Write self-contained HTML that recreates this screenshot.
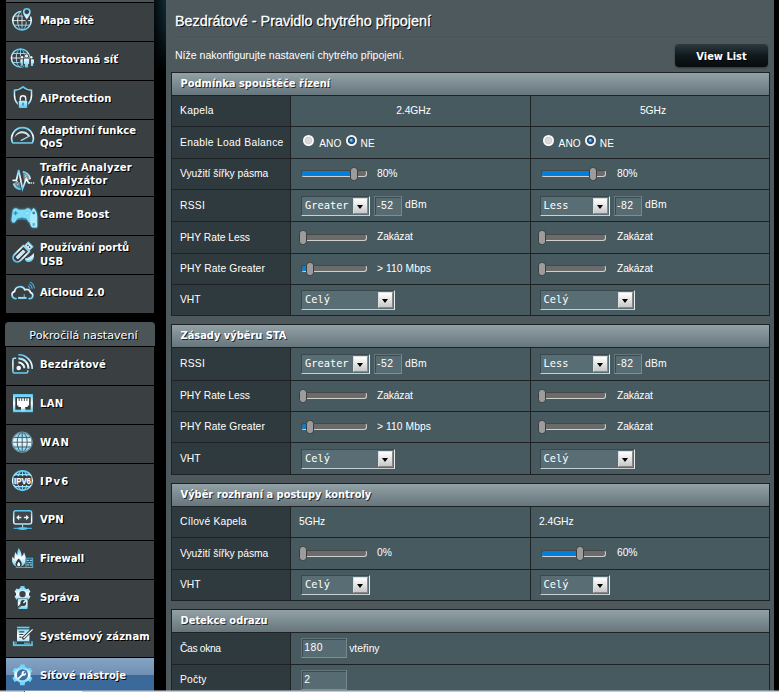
<!DOCTYPE html>
<html lang="cs"><head><meta charset="utf-8"><title>Bezdrátové - Pravidlo chytrého připojení</title>
<style>
html,body{margin:0;padding:0;}
body{width:779px;height:692px;overflow:hidden;background:#000;position:relative;font-family:"Liberation Sans",sans-serif;font-size:10.6px;color:#fff;}
*{box-sizing:border-box;}
.abs{position:absolute;}
#side{position:absolute;left:0;top:0;width:166px;height:692px;background:#000;}
#glow{position:absolute;left:154px;top:0;width:12px;height:80px;background:linear-gradient(to right,rgba(0,0,0,.75),rgba(0,0,0,0)),linear-gradient(to bottom,#0f2c35 0%,#0b2028 35%,#000 90%);}
.mi{position:absolute;left:6px;width:148px;background:#3a4042;}
.mi .t{position:absolute;left:34px;font-family:"DejaVu Sans",sans-serif;font-weight:bold;font-size:10.05px;line-height:13px;color:#fff;text-shadow:1px 1px 0 #000;white-space:nowrap;}
.mi svg{position:absolute;left:4px;}
.mi.sel{background:linear-gradient(to bottom,#86a4c3 0%,#6f90b4 44%,#3b6a9a 45.5%,#3b6a9a 100%);}
#adv{position:absolute;left:5px;top:322px;width:150px;height:24px;background:#4b5558;border-radius:4px 4px 0 0;font-family:"DejaVu Sans",sans-serif;font-size:11.1px;text-align:center;line-height:27px;padding-left:7px;letter-spacing:.05px;color:#fff;text-shadow:1px 1px 0 #000;}
#panel{position:absolute;left:166px;top:0;width:608px;height:692px;background:#4d595d;}
#title{position:absolute;left:175px;top:11.7px;font-size:14.4px;line-height:18px;white-space:nowrap;text-shadow:1px 1px 0 #000;-webkit-text-stroke:.3px #fff;}
#split{position:absolute;left:174px;top:37px;width:594px;height:1px;background:#515d61;border-top:1px solid #4a565a;box-sizing:content-box;}
#desc{position:absolute;left:175px;top:47.6px;font-size:10.55px;line-height:14px;white-space:nowrap;}
#btn{position:absolute;left:675px;top:44px;width:93px;height:23px;border-radius:4px;background:linear-gradient(to bottom,#2b3b40 0%,#11191c 50%,#070b0d 100%);font-family:"DejaVu Sans",sans-serif;font-weight:bold;font-size:9.9px;text-align:center;line-height:26px;text-shadow:1px 1px 0 #000;box-shadow:0 1px 2px rgba(0,0,0,.4);}
.tb{position:absolute;left:171px;width:599px;background:#1f2224;}
.hd{position:absolute;left:1px;top:1px;width:597px;height:22px;background:linear-gradient(to bottom,#93a1a6 0%,#66767c 100%);font-family:"DejaVu Sans",sans-serif;font-weight:bold;font-size:9.9px;line-height:22px;padding-left:8.5px;text-shadow:1px 1px 0 rgba(0,0,0,.7);white-space:nowrap;}
.th{position:absolute;left:1px;width:118px;background:#2f3a3e;padding-left:8px;display:flex;align-items:center;white-space:nowrap;font-size:10.3px;padding-bottom:1px;}
.th b{font-weight:normal;}
.td{position:absolute;background:#475a5f;font-size:10.3px;}
.td1{left:120px;width:239px;}
.td2{left:360px;width:238px;}
.ctr{position:absolute;left:6px;right:0;text-align:center;}
.tx{position:absolute;white-space:nowrap;line-height:12px;}
.tx.sm{font-size:10.1px;letter-spacing:.15px;}
.sel{}
.select{position:absolute;height:20px;background:#596e74;border-top:1px solid #39484c;border-left:1px solid #39484c;border-right:1px solid #e8ecee;border-bottom:1px solid #c9d0d3;font-family:"DejaVu Sans Mono","Liberation Mono",monospace;font-size:10.35px;line-height:17px;padding-left:3px;color:#fff;white-space:nowrap;}
.select i{position:absolute;right:1px;top:1px;width:15px;height:16px;background:linear-gradient(to bottom,#fff 0%,#e4e4e4 50%,#c8c8c8 100%);border:1px solid #888;border-top-color:#ddd;border-left-color:#ddd;}
.select i:after{content:"";position:absolute;left:3px;top:6px;border-left:3.5px solid transparent;border-right:3.5px solid transparent;border-top:4px solid #000;}
.input{position:absolute;height:20px;background:#576c72;border:1px solid #65767b;border-right-color:#75878c;border-bottom-color:#7d8f94;box-shadow:inset 1px 1px 0 #3d4b4f;font-family:"Liberation Sans",sans-serif;font-size:10.4px;letter-spacing:.5px;line-height:18.4px;padding-left:2.3px;color:#fff;white-space:nowrap;}
.radio{position:absolute;width:11.2px;height:11.2px;border-radius:50%;background:radial-gradient(circle closest-side at 50% 50%,#d6d6d6 0%,#dcdcdc 45%,#c9c9c9 60%,#f4f4f4 72%,#ffffff 100%);}
.radio.on{background:radial-gradient(circle closest-side at 50% 50%,#4db0f0 0%,#1f86d2 28%,#16609c 40%,#2a3b4c 50%,#3a4858 60%,#e9e9e9 70%,#ffffff 100%);}
.radio.on:after{content:"";position:absolute;left:4.2px;top:3.6px;width:2px;height:2px;border-radius:50%;background:rgba(255,255,255,.55);}
.track{position:absolute;width:65.6px;height:7px;border-radius:3px;background:#6b6b6b;border:1px solid #474747;border-right-color:#d0d0d0;border-bottom-color:#d0d0d0;}
.fill{position:absolute;height:5px;background:#0080dc;border-radius:2.5px 0 0 2.5px;}
.thumb{position:absolute;width:8px;height:14.6px;border-radius:3.5px;background:#9c9c9c;border:1px solid #3c3c3c;}
#bbar{position:absolute;left:0;top:690px;width:779px;height:2px;background:linear-gradient(to bottom,rgba(185,194,204,.55) 0,rgba(185,194,204,.55) 1px,#c3ccd6 1px,#c3ccd6 2px);}
#bbar i{position:absolute;left:23.5px;top:.5px;width:58px;height:1.5px;background:#fff;border-left:1px solid #556;}
</style></head>
<body>
<div id="side">
<div id="glow"></div>
<div class="abs" style="left:6px;top:0;width:148px;height:2px;background:#4b5558"></div>
<div class="mi" style="top:3px;height:38px;overflow:hidden">
<div class="t" style="top:10.6px"><span style="letter-spacing:-0.14px">Mapa sítě</span></div>
</div>
<div class="mi" style="top:42px;height:38px;overflow:hidden">
<div class="t" style="top:10.6px">Hostovaná síť</div>
</div>
<div class="mi" style="top:81px;height:38px;overflow:hidden">
<div class="t" style="top:10.6px"><span style="letter-spacing:0.11px">AiProtection</span></div>
</div>
<div class="mi" style="top:120px;height:37px;overflow:hidden">
<div class="t" style="top:3.5px;line-height:13.9px">Adaptivní funkce<br>QoS</div>
</div>
<div class="mi" style="top:158px;height:38px;overflow:hidden">
<div class="t" style="top:3.8px;line-height:12.8px"><span style="letter-spacing:0.22px">Traffic Analyzer</span><br><span style="letter-spacing:0.18px">(Analyzátor</span><br><span style="letter-spacing:0.18px">provozu)</span></div>
</div>
<div class="mi" style="top:197px;height:38px;overflow:hidden">
<div class="t" style="top:10.6px"><span style="letter-spacing:0.14px">Game Boost</span></div>
</div>
<div class="mi" style="top:236px;height:38px;overflow:hidden">
<div class="t" style="top:4.8px;line-height:13.9px">Používání portů<br>USB</div>
</div>
<div class="mi" style="top:275px;height:38px;overflow:hidden">
<div class="t" style="top:10.6px">AiCloud 2.0</div>
</div>
<div id="adv">Pokročilá nastavení</div>
<div class="mi" style="top:347px;height:38px"><div class="t" style="top:10.8px"><span style="letter-spacing:0.17px">Bezdrátové</span></div></div>
<div class="mi" style="top:386px;height:38px"><div class="t" style="top:10.8px"><span style="letter-spacing:0.25px">LAN</span></div></div>
<div class="mi" style="top:425px;height:38px"><div class="t" style="top:10.8px"><span style="letter-spacing:1.0px">WAN</span></div></div>
<div class="mi" style="top:464px;height:38px"><div class="t" style="top:10.8px"><span style="letter-spacing:1.2px">IPv6</span></div></div>
<div class="mi" style="top:503px;height:37px"><div class="t" style="top:10.3px">VPN</div></div>
<div class="mi" style="top:541px;height:38px"><div class="t" style="top:10.8px"><span style="letter-spacing:-0.13px">Firewall</span></div></div>
<div class="mi" style="top:580px;height:38px"><div class="t" style="top:10.8px">Správa</div></div>
<div class="mi" style="top:619px;height:38px"><div class="t" style="top:10.8px"><span style="letter-spacing:0.1px">Systémový záznam</span></div></div>
<div class="mi sel" style="top:658px;height:38px"><div class="t" style="top:10.8px">Síťové nástroje</div></div>
<svg width="0" height="0" style="position:absolute"><defs><linearGradient id="ig_map" gradientUnits="userSpaceOnUse" x1="0" y1="6" x2="0" y2="29"><stop offset="0" stop-color="#4fc9f5"/><stop offset="0.5" stop-color="#ffffff"/><stop offset="1" stop-color="#4fc9f5"/></linearGradient><linearGradient id="ig_guest" gradientUnits="userSpaceOnUse" x1="0" y1="6.5" x2="0" y2="25.5"><stop offset="0" stop-color="#4fc9f5"/><stop offset="0.5" stop-color="#ffffff"/><stop offset="1" stop-color="#4fc9f5"/></linearGradient><linearGradient id="ig_shield" gradientUnits="userSpaceOnUse" x1="0" y1="5.5" x2="0" y2="27"><stop offset="0" stop-color="#4fc9f5"/><stop offset="0.5" stop-color="#ffffff"/><stop offset="1" stop-color="#4fc9f5"/></linearGradient><linearGradient id="ig_qos" gradientUnits="userSpaceOnUse" x1="0" y1="7" x2="0" y2="24"><stop offset="0" stop-color="#4fc9f5"/><stop offset="0.5" stop-color="#ffffff"/><stop offset="1" stop-color="#4fc9f5"/></linearGradient><linearGradient id="ig_traffic" gradientUnits="userSpaceOnUse" x1="0" y1="11.5" x2="0" y2="32"><stop offset="0" stop-color="#4fc9f5"/><stop offset="0.5" stop-color="#ffffff"/><stop offset="1" stop-color="#4fc9f5"/></linearGradient><linearGradient id="ig_game" gradientUnits="userSpaceOnUse" x1="0" y1="10" x2="0" y2="28"><stop offset="0" stop-color="#4fc9f5"/><stop offset="0.5" stop-color="#ffffff"/><stop offset="1" stop-color="#4fc9f5"/></linearGradient><linearGradient id="ig_usb" gradientUnits="userSpaceOnUse" x1="0" y1="6" x2="0" y2="27"><stop offset="0" stop-color="#4fc9f5"/><stop offset="0.5" stop-color="#ffffff"/><stop offset="1" stop-color="#4fc9f5"/></linearGradient><linearGradient id="ig_cloud" gradientUnits="userSpaceOnUse" x1="0" y1="10" x2="0" y2="25.5"><stop offset="0" stop-color="#4fc9f5"/><stop offset="0.5" stop-color="#ffffff"/><stop offset="1" stop-color="#4fc9f5"/></linearGradient><linearGradient id="ig_wifi" gradientUnits="userSpaceOnUse" x1="0" y1="8" x2="0" y2="28"><stop offset="0" stop-color="#4fc9f5"/><stop offset="0.5" stop-color="#ffffff"/><stop offset="1" stop-color="#4fc9f5"/></linearGradient><linearGradient id="ig_lan" gradientUnits="userSpaceOnUse" x1="0" y1="9" x2="0" y2="27.2"><stop offset="0" stop-color="#4fc9f5"/><stop offset="0.5" stop-color="#ffffff"/><stop offset="1" stop-color="#4fc9f5"/></linearGradient><linearGradient id="ig_wan" gradientUnits="userSpaceOnUse" x1="0" y1="8" x2="0" y2="28.4"><stop offset="0" stop-color="#4fc9f5"/><stop offset="0.5" stop-color="#ffffff"/><stop offset="1" stop-color="#4fc9f5"/></linearGradient><linearGradient id="ig_ipv6" gradientUnits="userSpaceOnUse" x1="0" y1="7.5" x2="0" y2="28"><stop offset="0" stop-color="#4fc9f5"/><stop offset="0.5" stop-color="#ffffff"/><stop offset="1" stop-color="#4fc9f5"/></linearGradient><linearGradient id="ig_vpn" gradientUnits="userSpaceOnUse" x1="0" y1="8" x2="0" y2="27.5"><stop offset="0" stop-color="#4fc9f5"/><stop offset="0.5" stop-color="#ffffff"/><stop offset="1" stop-color="#4fc9f5"/></linearGradient><linearGradient id="ig_fire" gradientUnits="userSpaceOnUse" x1="0" y1="8" x2="0" y2="27.5"><stop offset="0" stop-color="#4fc9f5"/><stop offset="0.5" stop-color="#ffffff"/><stop offset="1" stop-color="#4fc9f5"/></linearGradient><linearGradient id="ig_admin" gradientUnits="userSpaceOnUse" x1="0" y1="6.5" x2="0" y2="23.5"><stop offset="0" stop-color="#4fc9f5"/><stop offset="0.5" stop-color="#ffffff"/><stop offset="1" stop-color="#4fc9f5"/></linearGradient><linearGradient id="ig_log" gradientUnits="userSpaceOnUse" x1="0" y1="8.5" x2="0" y2="28"><stop offset="0" stop-color="#4fc9f5"/><stop offset="0.5" stop-color="#ffffff"/><stop offset="1" stop-color="#4fc9f5"/></linearGradient><linearGradient id="ig_tools" gradientUnits="userSpaceOnUse" x1="0" y1="12" x2="0" y2="33"><stop offset="0" stop-color="#4fc9f5"/><stop offset="0.5" stop-color="#ffffff"/><stop offset="1" stop-color="#4fc9f5"/></linearGradient><linearGradient id="ig2" gradientUnits="userSpaceOnUse" x1="0" y1="17" x2="0" y2="31"><stop offset="0" stop-color="#4fc9f5"/><stop offset="0.5" stop-color="#ffffff"/><stop offset="1" stop-color="#4fc9f5"/></linearGradient><linearGradient id="ig3" gradientUnits="userSpaceOnUse" x1="0" y1="13" x2="0" y2="33"><stop offset="0" stop-color="#4fc9f5"/><stop offset="0.5" stop-color="#ffffff"/><stop offset="1" stop-color="#4fc9f5"/></linearGradient></defs></svg>
<svg class="ico" width="40" height="40" viewBox="0 0 40 40" style="position:absolute;left:4px;top:2px"><g fill="none" stroke="url(#ig_map)" stroke-width="1.5"><circle cx="18" cy="18.6" r="9.3"/><g stroke-width=".95" opacity=".9"><ellipse cx="18" cy="18.6" rx="4.4" ry="9.3"/><path d="M18,9.3V27.9M8.7,18.6H27.3M10,14H26M10,23.2H26"/></g></g><path d="M22.8,18.2 C21.5,15.5 18.4,12.8 18.4,9.9 a4.4,4.4 0 0 1 8.8,0 C27.2,12.8 24.1,15.5 22.8,18.2Z" fill="#3a4042" stroke="#3a4042" stroke-width="2.2"/><path d="M22.8,17.6 C21.6,15.2 18.9,12.6 18.9,9.9 a3.9,3.9 0 0 1 7.8,0 C26.7,12.6 24,15.2 22.8,17.6Z M22.8,7.6a2.3,2.3 0 1 0 0.01,0Z" fill="url(#ig_map)" fill-rule="evenodd"/></svg>
<svg class="ico" width="40" height="40" viewBox="0 0 40 40" style="position:absolute;left:4px;top:42px"><g fill="none" stroke="url(#ig_guest)" stroke-width="1.5"><circle cx="16.5" cy="16" r="9.1"/><g stroke-width=".95" opacity=".9"><ellipse cx="16.5" cy="16" rx="4.3" ry="9.1"/><path d="M16.5,6.9V25.1M7.4,16H25.6M8.8,11.5H24.2M8.8,20.5H24.2"/></g></g><g fill="#3a4042" stroke="#3a4042" stroke-width="1.6"><circle cx="22.5" cy="13.9" r="1.6"/><path d="M19.9,17.6 q0,-1 1,-1 h3.2 q1,0 1,1 v4.4 h-1 v3.6 h-3.2 v-3.6 h-1z"/><circle cx="18.1" cy="15.3" r="1.2"/><path d="M16.3,18.2 q0,-.9 .9,-.9 h1.6 v6.6 h-1.6 v-2.4 h-.9z"/><circle cx="27.3" cy="15.3" r="1.2"/><path d="M30,18.2 q0,-.9 -.9,-.9 h-2.2 v6.6 h2.2 v-2.4 h.9z"/></g><g fill="url(#ig_guest)"><circle cx="22.5" cy="13.9" r="1.6"/><path d="M19.9,17.6 q0,-1 1,-1 h3.2 q1,0 1,1 v4.4 h-1 v3.6 h-3.2 v-3.6 h-1z"/><circle cx="18.1" cy="15.3" r="1.2"/><path d="M16.3,18.2 q0,-.9 .9,-.9 h1.6 v6.6 h-1.6 v-2.4 h-.9z"/><circle cx="27.3" cy="15.3" r="1.2"/><path d="M30,18.2 q0,-.9 -.9,-.9 h-2.2 v6.6 h2.2 v-2.4 h.9z"/></g></svg>
<svg class="ico" width="40" height="40" viewBox="0 0 40 40" style="position:absolute;left:4px;top:81px"><path d="M19,5.8 C17,7.8 13.8,9.1 10.5,9.3 C10.3,13 10.4,16 11,18.2 C11.9,21.4 14.2,24 19,26.4 C23.8,24 26.1,21.4 27,18.2 C27.6,16 27.7,13 27.5,9.3 C24.2,9.1 21,7.8 19,5.8Z" fill="none" stroke="url(#ig_shield)" stroke-width="1.5"/><path d="M19,8.4 C17.2,9.8 15,10.8 12.5,11.1 C12.4,14 12.5,16 13,17.8 C13.8,20.4 15.5,22.4 19,24.2 C22.5,22.4 24.2,20.4 25,17.8 C25.5,16 25.6,14 25.5,11.1 C23,10.8 20.8,9.8 19,8.4Z" fill="none" stroke="#2c3133" stroke-width="0.7"/><rect x="13.9" y="18.9" width="10.2" height="8.8" fill="#3a4042"/><path d="M16.3,19.8 v-2.4 a2.7,2.7 0 0 1 5.4,0 v2.4" fill="none" stroke="url(#ig_shield)" stroke-width="1.4"/><rect x="14.8" y="19.7" width="8.4" height="7.2" rx="1" fill="url(#ig_shield)"/><rect x="18.4" y="21.6" width="1.2" height="3" fill="#2f6a8a"/></svg>
<svg class="ico" width="40" height="40" viewBox="0 0 40 40" style="position:absolute;left:4px;top:120px"><path d="M8.7,23 A10.8,10.8 0 1 1 28.3,23 Z" fill="none" stroke="url(#ig_qos)" stroke-width="1.7" stroke-linejoin="round"/><path d="M10.6,17.2 C13.5,9.6 22,9.8 25.8,15.6 L24.2,16.6 C21,12 14.5,12.2 10.6,17.2Z" fill="#dfe6ea"/><path d="M17.3,20.3 L25.6,16" stroke="#9fdcf5" stroke-width="1.3" stroke-linecap="round"/></svg>
<svg class="ico" width="40" height="40" viewBox="0 0 40 40" style="position:absolute;left:4px;top:158px"><g fill="url(#ig_traffic)" opacity=".45"><path d="M18.6,13.2 A9,9 0 0 1 26.6,21.4 L23.6,22.6 L22.3,20.4 L20.4,25 Z"/><path d="M9.2,25.2 A9,9 0 0 0 17,31.6 L15.4,24 L13.2,24.2 Z"/></g><g fill="none" stroke="url(#ig_traffic)" stroke-width="1.8" opacity=".9"><path d="M18.8,13.6 A8.6,8.6 0 0 1 26.2,21"/><path d="M9.6,25.6 A8.6,8.6 0 0 0 16.8,31.4"/></g><path d="M20.5,16.5l2,1.2M21,19l1.4,-2.2M11.5,24.5l2.5,-1.2M13,26.8l1.5,-1" stroke="url(#ig_traffic)" stroke-width="1" opacity=".8"/><path d="M9.2,22.3 H12.4 L14.7,12 L18.5,31 L22.3,20.8 L24.6,24.9 H25.6" fill="none" stroke="url(#ig_traffic)" stroke-width="1.7" stroke-linejoin="miter" stroke-linecap="round"/><circle cx="27.4" cy="25" r=".8" fill="#e8f4fa"/><circle cx="29.6" cy="25" r=".8" fill="#e8f4fa"/></svg>
<svg class="ico" width="40" height="40" viewBox="0 0 40 40" style="position:absolute;left:4px;top:197px"><g style="filter:drop-shadow(0 0 1.2px #4cc8f0)"><path d="M8.6,14.5 Q9,11.2 11.8,11.2 Q13.8,11.2 14.6,12.8 L21,12.8 Q21.8,11.2 23.8,11.2 Q26.6,11.2 27,14.5 L28,22 Q28.4,25.8 26.2,25.8 Q24.6,25.8 23.2,22.6 Q18,19.2 12.6,22.6 Q11.2,25.8 9.6,25.8 Q7.2,25.8 7.6,22 Z" fill="#7fdcf7"/><path d="M29.6,11 C31.8,13 33.2,16 33.2,20 L33.2,30.6 L28.6,30.6 C26,29 25.6,25 26.2,20 C26.4,16 27.6,13 29.6,11Z" fill="#a9eafb"/></g><path d="M11.6,14.2v4M9.6,16.2h4" stroke="#2f8fb5" stroke-width="1.3"/><path d="M23.2,14.2 l2,2 l-2,2 l-2,-2z" fill="#a9eafb" stroke="#55bfe6" stroke-width=".6"/><circle cx="29.7" cy="16" r="1.4" fill="#2f8fb5"/><path d="M28.6,26h2.2v3h-2.2z" fill="#4cb9e2"/><path d="M13,22.4 Q18,19.4 23,22.4 Q18,21.4 13,22.4Z" fill="#2f8fb5" stroke="#2f8fb5" stroke-width="1"/></svg>
<svg class="ico" width="40" height="40" viewBox="0 0 40 40" style="position:absolute;left:4px;top:236px"><g transform="rotate(45 17.5 17.5)"><path d="M13.3,10.6 H21.7 V23.4 A4.2,4.2 0 0 1 13.3,23.4Z" fill="none" stroke="url(#ig_usb)" stroke-width="1.8"/><path d="M16.2,13.8 H18.8 V22.8 A1.3,1.3 0 0 1 16.2,22.8Z" fill="#bfeaf9" stroke="#e9f6fb" stroke-width=".8"/><rect x="14.2" y="4.6" width="6.6" height="5.4" fill="#e9f6fb" stroke="#6fd3f6" stroke-width="1.1"/><rect x="15.5" y="6.4" width="1.4" height="1.7" fill="#3a4042"/><rect x="18.1" y="6.4" width="1.4" height="1.7" fill="#3a4042"/></g><path d="M29.8,17 C30.6,21.5 29.2,25.6 25.2,26 C22.6,26.2 20.8,24.6 21,22.6 C24,21.8 27.4,20 29.8,17Z" fill="url(#ig_usb)"/><path d="M22.6,23.4 C25.4,23.6 27.8,22.2 28.8,20.2" stroke="#fff" stroke-width="1" fill="none"/></svg>
<svg class="ico" width="40" height="40" viewBox="0 0 40 40" style="position:absolute;left:4px;top:274px"><path d="M12,24.6 H11.3 A3.7,3.7 0 0 1 10.6,17.4 A5.5,5.5 0 0 1 21,15.8 A4,4 0 0 1 26.6,18.6 A3.1,3.1 0 0 1 26.3,24.6 H25" fill="none" stroke="url(#ig_cloud)" stroke-width="1.7" stroke-linecap="round"/><rect x="14" y="22.9" width="8.6" height="2" fill="#8fd0ec"/><path d="M20.2,20.2v2.8" stroke="#8fd0ec" stroke-width=".8"/><path d="M15,24h6.6" stroke="#d8eef8" stroke-width=".6" stroke-dasharray="1 .6"/><g fill="none" stroke="#4aa9d3" stroke-width="1.15"><path d="M23.88,12.07 A4.0,4.0 0 0 1 25.96,15.04"/><path d="M24.96,10.04 A6.3,6.3 0 0 1 28.24,14.72"/><path d="M26.04,8.01 A8.6,8.6 0 0 1 30.52,14.40"/></g></svg>
<svg class="ico" width="40" height="40" viewBox="0 0 40 40" style="position:absolute;left:4px;top:346px"><path d="M12.2,12.3 H10.4 Q8.9,12.3 8.9,13.8 V25.4 Q8.9,26.9 10.4,26.9 H22.3 Q23.8,26.9 23.8,25.4 V24.2" fill="none" stroke="url(#ig_wifi)" stroke-width="1.5"/><circle cx="14.7" cy="22" r="2.3" fill="#e4f5fc"/><g fill="none" stroke="url(#ig_wifi)"><path d="M14.4,16.6 A5.6,5.6 0 0 1 20.3,22.3" stroke-width="2"/><path d="M14.3,12.5 A9.6,9.6 0 0 1 24.4,22.7" stroke-width="2"/><path d="M14.3,8.8 A13.4,13.4 0 0 1 28.2,23" stroke-width="1.6"/></g></svg>
<svg class="ico" width="40" height="40" viewBox="0 0 40 40" style="position:absolute;left:4px;top:385px"><rect x="9" y="9" width="19.9" height="18.2" fill="url(#ig_lan)"/><rect x="11.3" y="12.1" width="15.4" height="12.6" fill="#353b3d"/><path d="M13,13.2 h1.7 v2.8 h.9 v-2.8 h1.7 v2.8 h.9 v-2.8 h1.7 v2.8 h.9 v-2.8 h1.7 v2.8 h.9 v-2.8 h1.7 V20.6 H23.7 V22.1 H21.2 V25 H17 V22.1 H14.4 V20.6 H13Z" fill="#fff"/><rect x="17" y="23.6" width="4.2" height="3" fill="#8fdcf8"/></svg>
<svg class="ico" width="40" height="40" viewBox="0 0 40 40" style="position:absolute;left:4px;top:424px"><circle cx="18.2" cy="18.2" r="10" fill="url(#ig_wan)" stroke="#7f9aaa" stroke-width="1"/><g fill="none" stroke="#3f4f57" stroke-width=".9"><ellipse cx="18.2" cy="18.2" rx="5" ry="9.8"/><path d="M18.2,8.4V28M8.4,18.2H28M9.8,13.4H26.6M9.8,23H26.6"/></g><circle cx="18.2" cy="18.2" r="10" fill="none" stroke="#6f8c9c" stroke-width="1.2" opacity=".8"/></svg>
<svg class="ico" width="40" height="40" viewBox="0 0 40 40" style="position:absolute;left:4px;top:463px"><g fill="none" stroke="url(#ig_ipv6)"><circle cx="18.5" cy="17.6" r="9.8" stroke-width="1.6"/><g stroke-width="1.1"><path d="M18.5,7.8V27.4"/><ellipse cx="18.5" cy="17.6" rx="5" ry="9.8"/><path d="M11,11.6H26M11,23.6H26"/></g></g><rect x="9.6" y="13.2" width="17.8" height="8.8" fill="#353b3d"/><text x="18.5" y="21.1" text-anchor="middle" textLength="16.8" lengthAdjust="spacingAndGlyphs" font-family="Liberation Sans, sans-serif" font-weight="bold" font-size="9.6" fill="#fff" stroke="#fff" stroke-width=".25">IPV6</text></svg>
<svg class="ico" width="40" height="40" viewBox="0 0 40 40" style="position:absolute;left:4px;top:502px"><rect x="9.7" y="8.8" width="17.9" height="13.3" rx="2" fill="none" stroke="url(#ig_vpn)" stroke-width="1.5"/><rect x="11" y="10.4" width="15.3" height="9.4" fill="#40474a"/><path d="M12.2,15.5 l2.9,-2.7 v1.9 h2.2 v1.6 h-2.2 v1.9z M25,15.5 l-2.9,-2.7 v1.9 h-2.2 v1.6 h2.2 v1.9z" fill="#dff3fb"/><path d="M18.6,22.8V26" stroke="#bfe8f8" stroke-width="1"/><path d="M9.6,26.3H27.8" stroke="#4fc9f5" stroke-width="1"/><ellipse cx="18.6" cy="26.6" rx="5" ry="1.3" fill="#4fc9f5"/></svg>
<svg class="ico" width="40" height="40" viewBox="0 0 40 40" style="position:absolute;left:4px;top:540px"><path d="M14.7,8 C16.5,10.5 17.8,13.5 17.6,16.5 C18.8,15.5 19.6,14 20,12.2 C21.8,15.5 22.2,19 21.4,22 C20.6,25 18.4,26.9 14.8,26.9 C11,26.9 8.6,24.6 8.2,21.2 C8,19.5 8.2,18 8.6,16.6 C9.2,17.8 9.8,18.6 10.6,19 C10.2,16.5 10.6,14 11.4,12 C12,13.4 12.6,14.4 13.4,15 C13.2,12.6 13.6,10.2 14.7,8Z" fill="url(#ig_fire)"/><path d="M14.7,18.4 C16.6,20.6 17.8,22.4 17.8,24.2 C17.8,25.8 16.6,26.9 14.7,26.9 C12.8,26.9 11.6,25.8 11.6,24.2 C11.6,22.4 12.8,20.6 14.7,18.4Z" fill="#2f3537"/><path d="M14.7,21.8 C15.6,23 16.2,23.8 16.2,24.8 C16.2,25.7 15.6,26.3 14.7,26.3 C13.8,26.3 13.2,25.7 13.2,24.8 C13.2,23.8 13.8,23 14.7,21.8Z" fill="#fff"/><rect x="21.9" y="18.2" width="6.8" height="9.2" fill="#3a4a52" stroke="#4ab3dc" stroke-width=".9"/><path d="M22.6,20.3h2.4M25.8,20.3h2.4M22.6,22.6h1M24.4,22.6h2.4M27.4,22.6h.8M22.6,24.9h2.4M25.8,24.9h2.4" stroke="#8fcbe4" stroke-width="1.2"/><path d="M11.8,27.5H29.1" stroke="#4ab3dc" stroke-width=".9"/></svg>
<svg class="ico" width="40" height="40" viewBox="0 0 40 40" style="position:absolute;left:4px;top:579px"><path d="M16.21,9.23 L16.58,7.03 L20.42,7.03 L20.79,9.23 L22.44,10.19 L24.53,9.40 L26.45,12.73 L24.73,14.14 L24.73,16.06 L26.45,17.47 L24.53,20.80 L22.44,20.01 L20.79,20.97 L20.42,23.17 L16.58,23.17 L16.21,20.97 L14.56,20.01 L12.47,20.80 L10.55,17.47 L12.27,16.06 L12.27,14.14 L10.55,12.73 L12.47,9.40 L14.56,10.19Z" fill="url(#ig_admin)"/><circle cx="18.5" cy="15.1" r="6.4" fill="url(#ig_admin)"/><circle cx="18.5" cy="15.1" r="3.2" fill="#3b4144"/><rect x="13.2" y="19.6" width="10.9" height="10.6" fill="#3a4042"/><rect x="13.8" y="20.1" width="9.8" height="9.8" rx="1" fill="url(#ig2)"/><circle cx="19.3" cy="24" r="2.9" fill="#353b3e"/><path d="M17.8,25.2 L13.4,29.4" stroke="#353b3e" stroke-width="2"/><path d="M19.4,24 L22,21.4" stroke="#dff3fb" stroke-width="1.5"/><path d="M16.4,27.2 L14.2,29.2" stroke="#cfe6f0" stroke-width=".7"/></svg>
<svg class="ico" width="40" height="40" viewBox="0 0 40 40" style="position:absolute;left:4px;top:618px"><rect x="13" y="8.7" width="12.4" height="1.6" fill="#5fd0f6"/><rect x="13" y="11.3" width="12.4" height="12" fill="url(#ig_log)"/><path d="M15.3,13.9h5M15.3,16.5h4M15.3,19.1h2.2" stroke="#3a4042" stroke-width="1.1"/><path d="M28.8,11.2 L18.6,20.9" stroke="#33393b" stroke-width="3.2"/><path d="M28.6,11.4 L19.4,20.2" stroke="#f2fafd" stroke-width="1.3"/><path d="M18.2,21.3l1.6,-.6l-1,-1z" fill="#33393b"/><path d="M9.6,23.2 V27.2 H28 V23.2" fill="none" stroke="#5fd0f6" stroke-width="1.4"/><path d="M9,27.3H28.7" stroke="#4fc9f5" stroke-width="1.6"/><path d="M12,25.2h8" stroke="#2b3032" stroke-width="1"/><path d="M20,25.2h6" stroke="#7fbcd6" stroke-width="1"/><circle cx="11.6" cy="25" r="1" fill="none" stroke="#8fd8f5" stroke-width=".6"/></svg>
<svg class="ico" width="40" height="40" viewBox="0 0 40 40" style="position:absolute;left:4px;top:652px"><path d="M15.75,15.25 L16.16,12.44 L20.64,12.44 L21.05,15.25 L23.61,16.73 L26.26,15.68 L28.49,19.56 L26.26,21.32 L26.26,24.28 L28.49,26.04 L26.26,29.92 L23.61,28.87 L21.05,30.35 L20.64,33.16 L16.16,33.16 L15.75,30.35 L13.19,28.87 L10.54,29.92 L8.31,26.04 L10.54,24.28 L10.54,21.32 L8.31,19.56 L10.54,15.68 L13.19,16.73Z" fill="#6fd8fb"/><circle cx="18.4" cy="22.8" r="6.9" fill="none" stroke="url(#ig3)" stroke-width="2.6"/><circle cx="18.4" cy="22.8" r="5.5" fill="#3f6f9f"/><path d="M14.6,26.4 L18.6,22.6" stroke="#fff" stroke-width="1.7" stroke-linecap="round"/><circle cx="19.8" cy="21.4" r="2.3" fill="#fff"/><path d="M19.8,21.4 L22.6,18.8" stroke="#3f6f9f" stroke-width="1.4"/></svg>
</div>
<div id="panel"></div>
<div id="title">Bezdrátové - Pravidlo chytrého připojení</div>
<div id="split"></div>
<div id="desc">Níže nakonfigurujte nastavení chytrého připojení.</div>
<div id="btn">View List</div>
<div class="tb" style="top:72px;height:244px">
<div class="hd" style="height:22px;line-height:22px">Podmínka spouštěče řízení</div>
<div class="th" style="top:24px;height:30px;letter-spacing:0.3px;"><b>Kapela</b></div>
<div class="td td1" style="top:24px;height:30px"><div class="ctr tx" style="top:8.5px;letter-spacing:-0.05px;">2.4GHz</div></div>
<div class="td td2" style="top:24px;height:30px"><div class="ctr tx" style="top:8.5px;letter-spacing:-0.05px;">5GHz</div></div>
<div class="th" style="top:55px;height:31px;letter-spacing:0.3px;"><b>Enable Load Balance</b></div>
<div class="td td1" style="top:55px;height:31px"><div class="radio" style="left:12.3px;top:8.1px"></div><div class="tx sm" style="left:28.2px;top:11.0px">ANO</div><div class="radio on" style="left:54.7px;top:8.1px"></div><div class="tx sm" style="left:69.5px;top:11.0px">NE</div></div>
<div class="td td2" style="top:55px;height:31px"><div class="radio" style="left:11.600000000000001px;top:8.1px"></div><div class="tx sm" style="left:27.5px;top:11.0px">ANO</div><div class="radio on" style="left:54.0px;top:8.1px"></div><div class="tx sm" style="left:68.8px;top:11.0px">NE</div></div>
<div class="th" style="top:87px;height:30px;letter-spacing:-0.03px;"><b>Využití šířky pásma</b></div>
<div class="td td1" style="top:87px;height:30px"><div class="track" style="left:10.4px;top:11.4px"></div><div class="fill" style="left:11.4px;top:12.4px;width:50.6px"></div><div class="thumb" style="left:59.0px;top:7.9px"></div><div class="tx" style="left:86px;top:8.8px;letter-spacing:-0.05px;">80%</div></div>
<div class="td td2" style="top:87px;height:30px"><div class="track" style="left:9.6px;top:11.4px"></div><div class="fill" style="left:10.6px;top:12.4px;width:50.6px"></div><div class="thumb" style="left:58.2px;top:7.9px"></div><div class="tx" style="left:86px;top:8.8px;letter-spacing:-0.05px;">80%</div></div>
<div class="th" style="top:118px;height:31px;letter-spacing:0.25px;"><b>RSSI</b></div>
<div class="td td1" style="top:118px;height:31px"><div class="select" style="left:10px;top:5.5px;width:69px">Greater<i></i></div><div class="input" style="left:82.7px;top:5.5px;width:28px">-52</div><div class="tx" style="left:114px;top:9.0px;letter-spacing:0.15px;">dBm</div></div>
<div class="td td2" style="top:118px;height:31px"><div class="select" style="left:8.6px;top:5.5px;width:70.4px">Less<i></i></div><div class="input" style="left:82.7px;top:5.5px;width:28px">-82</div><div class="tx" style="left:114px;top:9.0px;letter-spacing:0.15px;">dBm</div></div>
<div class="th" style="top:150px;height:31px;letter-spacing:-0.02px;"><b>PHY Rate Less</b></div>
<div class="td td1" style="top:150px;height:31px"><div class="track" style="left:10.4px;top:11.9px"></div><div class="thumb" style="left:8.0px;top:8.4px"></div><div class="tx" style="left:86px;top:9.3px;letter-spacing:-0.13px;">Zakázat</div></div>
<div class="td td2" style="top:150px;height:31px"><div class="track" style="left:9.6px;top:11.9px"></div><div class="thumb" style="left:7.199999999999999px;top:8.4px"></div><div class="tx" style="left:86px;top:9.3px;letter-spacing:-0.13px;">Zakázat</div></div>
<div class="th" style="top:182px;height:30px;letter-spacing:0.1px;"><b>PHY Rate Greater</b></div>
<div class="td td1" style="top:182px;height:30px"><div class="track" style="left:10.4px;top:11.4px"></div><div class="fill" style="left:11.4px;top:12.4px;width:6.6px"></div><div class="thumb" style="left:15.0px;top:7.9px"></div><div class="tx" style="left:86px;top:8.8px;letter-spacing:0.06px;">&gt; 110 Mbps</div></div>
<div class="td td2" style="top:182px;height:30px"><div class="track" style="left:9.6px;top:11.4px"></div><div class="thumb" style="left:7.199999999999999px;top:7.9px"></div><div class="tx" style="left:86px;top:8.8px;letter-spacing:-0.13px;">Zakázat</div></div>
<div class="th" style="top:213px;height:30px;letter-spacing:0;"><b>VHT</b></div>
<div class="td td1" style="top:213px;height:30px"><div class="select" style="left:10px;top:5.0px;width:94px">Celý<i></i></div></div>
<div class="td td2" style="top:213px;height:30px"><div class="select" style="left:8.6px;top:5.0px;width:95.4px">Celý<i></i></div></div>
</div>
<div class="tb" style="top:324px;height:151px">
<div class="hd" style="height:22px;line-height:22px">Zásady výběru STA</div>
<div class="th" style="top:24px;height:32px;letter-spacing:0.25px;"><b>RSSI</b></div>
<div class="td td1" style="top:24px;height:32px"><div class="select" style="left:10px;top:6.0px;width:69px">Greater<i></i></div><div class="input" style="left:82.7px;top:6.0px;width:28px">-52</div><div class="tx" style="left:114px;top:9.5px;letter-spacing:0.15px;">dBm</div></div>
<div class="td td2" style="top:24px;height:32px"><div class="select" style="left:8.6px;top:6.0px;width:70.4px">Less<i></i></div><div class="input" style="left:82.7px;top:6.0px;width:28px">-82</div><div class="tx" style="left:114px;top:9.5px;letter-spacing:0.15px;">dBm</div></div>
<div class="th" style="top:57px;height:30px;letter-spacing:-0.02px;"><b>PHY Rate Less</b></div>
<div class="td td1" style="top:57px;height:30px"><div class="track" style="left:10.4px;top:11.4px"></div><div class="thumb" style="left:8.0px;top:7.9px"></div><div class="tx" style="left:86px;top:8.8px;letter-spacing:-0.13px;">Zakázat</div></div>
<div class="td td2" style="top:57px;height:30px"><div class="track" style="left:9.6px;top:11.4px"></div><div class="thumb" style="left:7.199999999999999px;top:7.9px"></div><div class="tx" style="left:86px;top:8.8px;letter-spacing:-0.13px;">Zakázat</div></div>
<div class="th" style="top:88px;height:30px;letter-spacing:0.1px;"><b>PHY Rate Greater</b></div>
<div class="td td1" style="top:88px;height:30px"><div class="track" style="left:10.4px;top:11.4px"></div><div class="fill" style="left:11.4px;top:12.4px;width:6.6px"></div><div class="thumb" style="left:15.0px;top:7.9px"></div><div class="tx" style="left:86px;top:8.8px;letter-spacing:0.06px;">&gt; 110 Mbps</div></div>
<div class="td td2" style="top:88px;height:30px"><div class="track" style="left:9.6px;top:11.4px"></div><div class="thumb" style="left:7.199999999999999px;top:7.9px"></div><div class="tx" style="left:86px;top:8.8px;letter-spacing:-0.13px;">Zakázat</div></div>
<div class="th" style="top:119px;height:31px;letter-spacing:0;"><b>VHT</b></div>
<div class="td td1" style="top:119px;height:31px"><div class="select" style="left:10px;top:5.5px;width:94px">Celý<i></i></div></div>
<div class="td td2" style="top:119px;height:31px"><div class="select" style="left:8.6px;top:5.5px;width:95.4px">Celý<i></i></div></div>
</div>
<div class="tb" style="top:483px;height:118px">
<div class="hd" style="height:22px;line-height:22px">Výběr rozhraní a postupy kontroly</div>
<div class="th" style="top:24px;height:30px;letter-spacing:0.2px;"><b>Cílové Kapela</b></div>
<div class="td td1" style="top:24px;height:30px"><div class="tx" style="left:8px;top:8.5px;letter-spacing:-0.05px;">5GHz</div></div>
<div class="td td2" style="top:24px;height:30px"><div class="tx" style="left:8px;top:8.5px;letter-spacing:-0.05px;">2.4GHz</div></div>
<div class="th" style="top:55px;height:31px;letter-spacing:-0.03px;"><b>Využití šířky pásma</b></div>
<div class="td td1" style="top:55px;height:31px"><div class="track" style="left:10.4px;top:11.9px"></div><div class="thumb" style="left:8.0px;top:8.4px"></div><div class="tx" style="left:86px;top:9.3px;letter-spacing:-0.05px;">0%</div></div>
<div class="td td2" style="top:55px;height:31px"><div class="track" style="left:9.6px;top:11.9px"></div><div class="fill" style="left:10.6px;top:12.9px;width:37.7px"></div><div class="thumb" style="left:45.300000000000004px;top:8.4px"></div><div class="tx" style="left:86px;top:9.3px;letter-spacing:-0.05px;">60%</div></div>
<div class="th" style="top:87px;height:30px;letter-spacing:0;"><b>VHT</b></div>
<div class="td td1" style="top:87px;height:30px"><div class="select" style="left:10px;top:5.0px;width:69px">Celý<i></i></div></div>
<div class="td td2" style="top:87px;height:30px"><div class="select" style="left:8.6px;top:5.0px;width:70.4px">Celý<i></i></div></div>
</div>
<div class="tb" style="top:609px;height:91px">
<div class="hd" style="height:22px;line-height:22px">Detekce odrazu</div>
<div class="th" style="top:24px;height:31px;letter-spacing:-0.35px;"><b>Čas okna</b></div>
<div class="td" style="left:120px;width:478px;top:24px;height:31px"><div class="input" style="left:10px;top:4.800000000000001px;width:45.5px">180</div><div class="tx" style="left:58.2px;top:9.8px;letter-spacing:0;">vteřiny</div></div>
<div class="th" style="top:56px;height:29px;letter-spacing:0.15px;"><b>Počty</b></div>
<div class="td" style="left:120px;width:478px;top:56px;height:29px"><div class="input" style="left:10px;top:5.0px;width:45.5px">2</div></div>
</div>
<div id="bbar"><i></i></div>
</body></html>
